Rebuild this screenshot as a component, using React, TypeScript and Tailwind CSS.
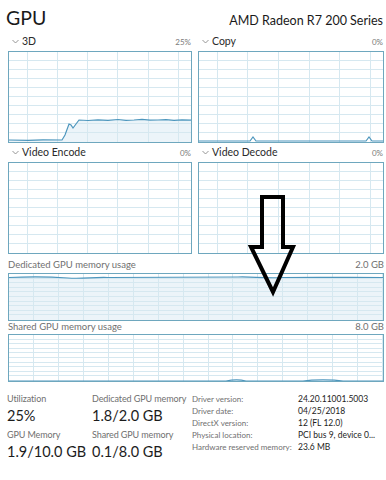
import React from "react";

const BORDER = "#6ea7be";
const GRID = "#d6e8f0";
const LINE = "#4d96bd";
const FILL = "#ecf4f9";

type ChartProps = {
	width: number;
	height: number;
	cols: number;
	offset: number;
	rows: number;
	line?: string;
	area?: string;
};

// Task manager style graph: grid, border, data trace
function Chart({ width, height, cols, offset, rows, line, area }: ChartProps) {
	const step = (width - 2) / cols;
	const vLines: number[] = [];
	for (let x = offset; x < width - 1; x += step) vLines.push(Math.round(x) + 0.5);
	const hLines: number[] = [];
	for (let i = 1; i < rows; i++) hLines.push(Math.round(((height - 2) / rows) * i) + 0.5);
	return (
		<svg width={width} height={height} className="block">
			<rect x={0} y={0} width={width} height={height} fill="#ffffff" />
			{area && <path d={area} fill={FILL} />}
			{vLines.map((x) => (
				<line key={"v" + x} x1={x} y1={1} x2={x} y2={height - 1} stroke={GRID} strokeWidth={1} />
			))}
			{hLines.map((y) => (
				<line key={"h" + y} x1={1} y1={y} x2={width - 1} y2={y} stroke={GRID} strokeWidth={1} />
			))}
			{line && <path d={line} fill="none" stroke={LINE} strokeWidth={1.2} />}
			<rect x={0.5} y={0.5} width={width - 1} height={height - 1} fill="none" stroke={BORDER} strokeWidth={1} />
		</svg>
	);
}

function Chevron() {
	return (
		<svg width={7} height={5} viewBox="0 0 7 5" className="mr-[3px]">
			<path d="M0.5 1 L3.5 4 L6.5 1" fill="none" stroke="#8a8a8a" strokeWidth={0.9} />
		</svg>
	);
}

function EngineLabel({ name, pct }: { name: string; pct: string }) {
	return (
		<div className="h-[19px] flex items-center justify-between pl-[4px] pr-[1px]">
			<div className="flex items-center text-[10.5px] text-[#2a2a2a]">
				<Chevron />
				{name}
			</div>
			<span className="text-[8px] text-[#7a7a7a]">{pct}</span>
		</div>
	);
}

const d3Line =
	"M1 89 L20 89.3 L35 88.8 L54 89 L57 84 L61 73 L63 74 L65 77 L68 73 L71 69 L80 69.5 L90 68.8 L100 69.3 L110 68.5 L118 69.4 L126 69 L134 68.4 L142 69.2 L150 69 L158 68.6 L166 69.3 L174 68.8 L183 69.2";
const d3Area = d3Line + " L183 91 L1 91 Z";

const copyLine =
	"M1 90 L52 90 L55 86 L58 90 L100 90 L168 90 L171 86 L174 90 L185 90";

const dedLine =
	"M1 4.5 C20 3.5 40 3.5 60 5 C75 6 85 4 100 4.5 C150 4 190 4.5 230 4 C245 3.5 255 5.5 275 4.5 C310 4 340 4.5 375 4.5";
const dedArea = dedLine + " L375 47 L1 47 Z";

const sharedLine =
	"M1 47 L218 47 C225 45.5 232 45.5 238 47 L295 47 C305 45.5 325 45.5 335 47 L375 47";

function Stat({ label, value }: { label: string; value: string }) {
	return (
		<div className="flex flex-col whitespace-nowrap">
			<span className="text-[9px] tracking-[-0.1px] leading-[12px] text-[#6f6f6f]">{label}</span>
			<span className="text-[14.5px] leading-[18px] text-[#1c1c1c] mt-[2px]">{value}</span>
		</div>
	);
}

const driverRows: [string, string][] = [
	["Driver version:", "24.20.11001.5003"],
	["Driver date:", "04/25/2018"],
	["DirectX version:", "12 (FL 12.0)"],
	["Physical location:", "PCI bus 9, device 0..."],
	["Hardware reserved memory:", "23.6 MB"],
];

export default function App() {
	return (
		<div
			className="relative w-[386px] h-[480px] bg-white overflow-hidden"
			style={{ fontFamily: "Lato, 'Noto Sans', sans-serif" }}
		>
			<div className="h-[32px] flex items-end justify-between pl-[6px] pr-[3px] pb-[5px]">
				<span className="text-[19.5px] leading-none text-[#1a1a1a]">GPU</span>
				<span className="text-[12.5px] leading-none text-[#1a1a1a]">AMD Radeon R7 200 Series</span>
			</div>

			<div className="grid grid-cols-[184px_186px] gap-x-[6px] pl-[8px]">
				<div>
					<EngineLabel name="3D" pct="25%" />
					<Chart width={184} height={92} cols={6} offset={18.5} rows={10} line={d3Line} area={d3Area} />
				</div>
				<div>
					<EngineLabel name="Copy" pct="0%" />
					<Chart width={186} height={92} cols={6} offset={18.5} rows={10} line={copyLine} />
				</div>
				<div>
					<EngineLabel name="Video Encode" pct="0%" />
					<Chart width={184} height={92} cols={6} offset={18.5} rows={10} />
				</div>
				<div>
					<EngineLabel name="Video Decode" pct="0%" />
					<Chart width={186} height={92} cols={6} offset={18.5} rows={10} />
				</div>
			</div>

			<div className="pl-[8px] pr-[2px]">
				<div className="h-[19px] flex items-end justify-between pb-[1px] text-[9.5px] text-[#707070]">
					<span>Dedicated GPU memory usage</span>
					<span>2.0 GB</span>
				</div>
				<Chart width={376} height={48} cols={15} offset={25} rows={10} line={dedLine} area={dedArea} />
				<div className="h-[13px] flex items-center justify-between text-[9.5px] text-[#707070]">
					<span>Shared GPU memory usage</span>
					<span>8.0 GB</span>
				</div>
				<Chart width={376} height={48} cols={15} offset={25} rows={10} line={sharedLine} />
			</div>

			<div className="flex pt-[11px] pl-[7px]">
				<div className="w-[85px] flex flex-col gap-[4px]">
					<Stat label="Utilization" value="25%" />
					<Stat label="GPU Memory" value="1.9/10.0 GB" />
				</div>
				<div className="w-[100px] flex flex-col gap-[4px]">
					<Stat label="Dedicated GPU memory" value="1.8/2.0 GB" />
					<Stat label="Shared GPU memory" value="0.1/8.0 GB" />
				</div>
				<div className="flex flex-col">
					{driverRows.map(([k, v]) => (
						<div key={k} className="flex h-[12px] items-center text-[8px] whitespace-nowrap">
							<span className="w-[106px] text-[#6f6f6f]">{k}</span>
							<span className="text-[8.5px] text-[#1c1c1c]">{v}</span>
						</div>
					))}
				</div>
			</div>

			{/* annotation arrow drawn over the screenshot */}
			<svg className="absolute left-0 top-0 pointer-events-none" width={386} height={480}>
				<path
					d="M262 197 H283 V247 H293 L273 292 L251 247 H262 Z"
					fill="none"
					stroke="#000000"
					strokeWidth={4}
					strokeLinejoin="miter"
				/>
			</svg>
		</div>
	);
}
